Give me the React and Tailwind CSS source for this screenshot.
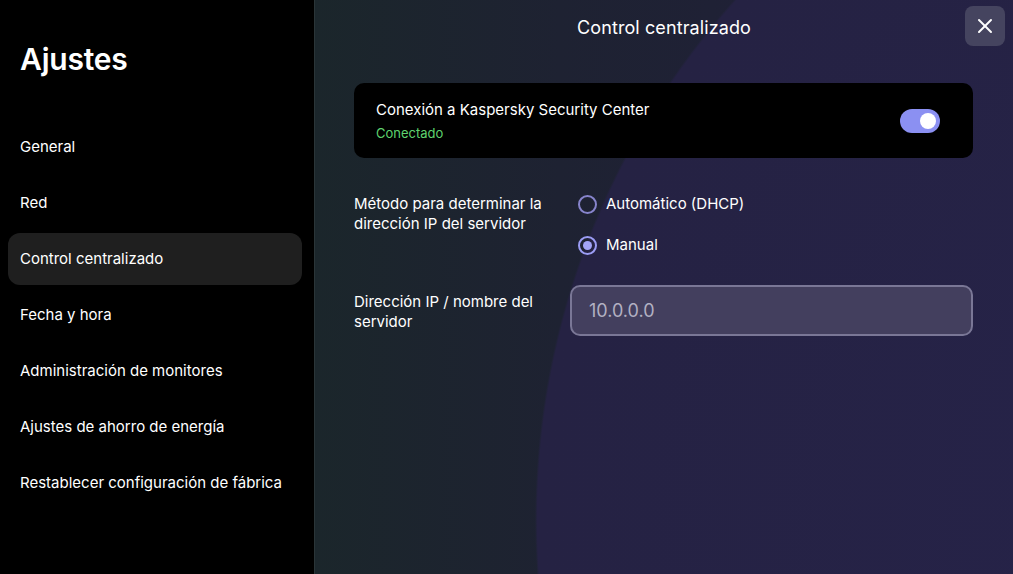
import React, { useState } from 'react';
import { X } from 'lucide-react';

const navItems = [
  'General',
  'Red',
  'Control centralizado',
  'Fecha y hora',
  'Administración de monitores',
  'Ajustes de ahorro de energía',
  'Restablecer configuración de fábrica',
];

const App = () => {
  const [active, setActive] = useState('Control centralizado');
  const [connected, setConnected] = useState(true);
  const [method, setMethod] = useState('manual');

  return (
    <div className="flex h-[574px] w-[1013px] overflow-hidden bg-black text-white font-['Inter','Noto_Sans',sans-serif]">
      {/* Sidebar */}
      <aside className="flex w-[314px] shrink-0 flex-col bg-black pl-2 pr-3">
        <h1 className="mt-[40px] px-3 text-[30px] font-semibold leading-[38px] tracking-[-0.2px]">Ajustes</h1>
        <nav className="mt-[43px] flex flex-col gap-1">
          {navItems.map((item) => (
            <button
              key={item}
              onClick={() => setActive(item)}
              className={`flex h-[52px] items-center rounded-xl px-3 text-left text-[15px] ${
                active === item ? 'bg-[#1f1f1f]' : ''
              }`}
            >
              {item}
            </button>
          ))}
        </nav>
      </aside>

      {/* Main panel */}
      <main className="flex flex-1 flex-col border-l border-[#2a3538] bg-[radial-gradient(circle_780px_at_1000px_520px,#26234a_0%,#252243_99.7%,transparent_100%),linear-gradient(90deg,#1b262b_0%,#1e2232_35%,#211f3b_100%)]">
        <header className="relative flex h-[54px] items-center justify-center">
          <h2 className="text-[18px] font-normal tracking-[0.1px]">Control centralizado</h2>
          <button className="absolute right-[8px] top-[6px] flex h-[40px] w-[40px] items-center justify-center rounded-lg bg-[#45445f]">
            <X size={24} strokeWidth={2} />
          </button>
        </header>

        <div className="mt-[29px] flex flex-col px-[39px] pr-[40px]">
          {/* Connection card */}
          <div className="flex h-[75px] items-center justify-between rounded-[10px] bg-black pl-[22px] pr-[33px]">
            <div className="flex flex-col">
              <span className="text-[15px] leading-[20px]">Conexión a Kaspersky Security Center</span>
              <span className="mt-[5px] text-[13px] leading-[16px] text-[#5fd36f]">Conectado</span>
            </div>
            <button
              onClick={() => setConnected(!connected)}
              className={`flex h-[24px] w-[40px] items-center rounded-full p-[4px] ${
                connected ? 'justify-end bg-[#8b90f2]' : 'justify-start bg-[#555]'
              }`}
            >
              <span className="h-[16px] w-[16px] rounded-full bg-white" />
            </button>
          </div>

          {/* Method row */}
          <div className="mt-[36px] flex">
            <div className="w-[216px] shrink-0 text-[15px] leading-[20px]">
              Método para determinar la dirección IP del servidor
            </div>
            <div className="flex flex-col gap-[21px] pl-[8px]">
              {[
                { id: 'auto', label: 'Automático (DHCP)' },
                { id: 'manual', label: 'Manual' },
              ].map((opt) => (
                <button key={opt.id} onClick={() => setMethod(opt.id)} className="flex h-[20px] items-center gap-[9px] text-[15px]">
                  <span
                    className={`flex h-[19px] w-[19px] items-center justify-center rounded-full border-2 ${
                      method === opt.id ? 'border-[#9b9cf4]' : 'border-[#8784cc]'
                    }`}
                  >
                    {method === opt.id && <span className="h-[9px] w-[9px] rounded-full bg-[#a3a4f8]" />}
                  </span>
                  {opt.label}
                </button>
              ))}
            </div>
          </div>

          {/* IP row */}
          <div className="mt-[30px] flex items-start">
            <div className="mt-[7px] w-[216px] shrink-0 text-[15px] leading-[20px]">
              Dirección IP / nombre del servidor
            </div>
            <input
              defaultValue="10.0.0.0"
              className="h-[51px] flex-1 rounded-[10px] border-2 border-[#7a7796] bg-[#433f5e] px-[17px] text-[18px] text-[#b2b0c2] outline-none"
            />
          </div>
        </div>
      </main>
    </div>
  );
};

export default App;
